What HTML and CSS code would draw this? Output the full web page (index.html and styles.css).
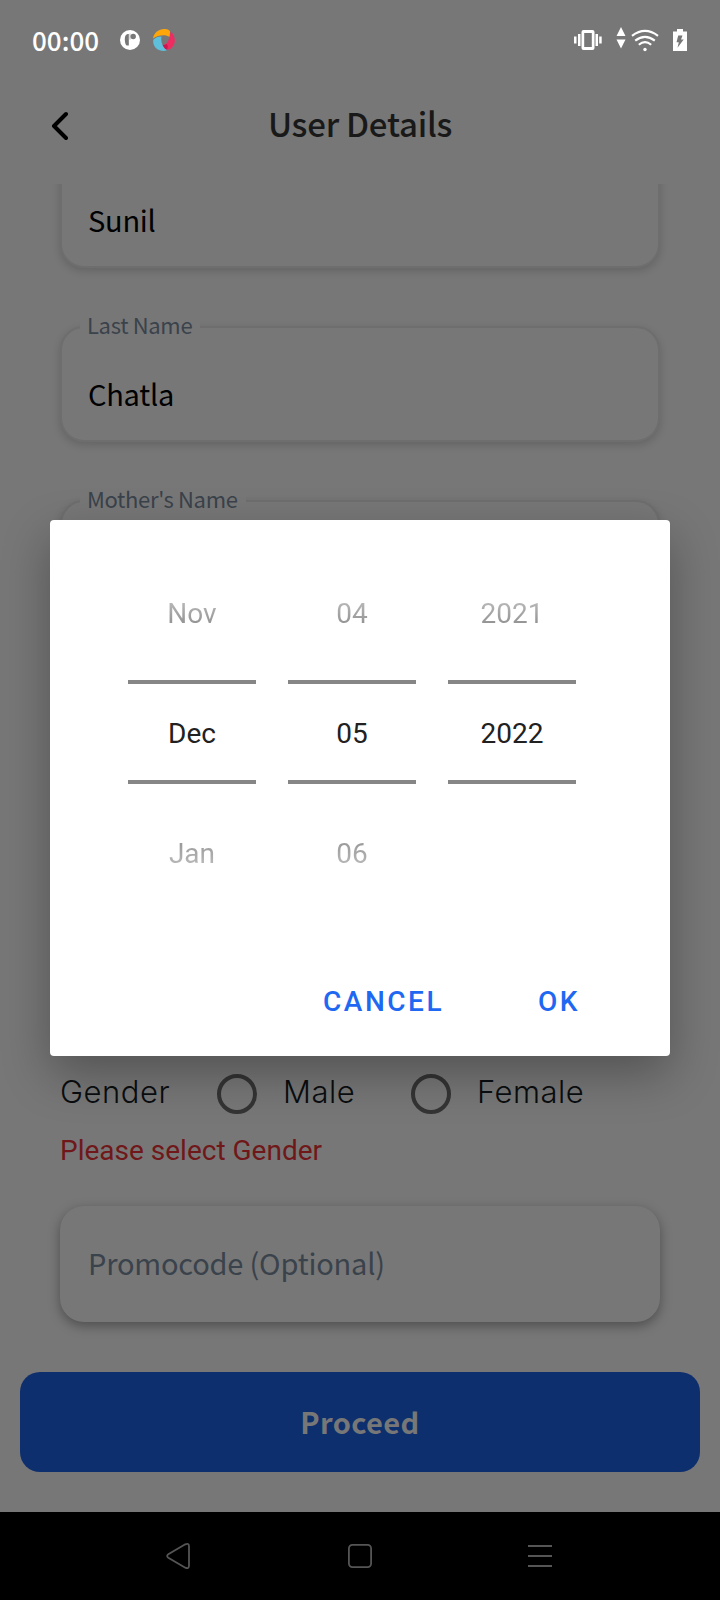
FILE: index.html
```html
<!DOCTYPE html>
<html lang="en">
<head>
<meta charset="utf-8">
<title>User Details</title>
<link rel="stylesheet" href="styles.css">
</head>
<body>
<div class="screen">
  <div class="status">
    <span class="clock">00:00</span>
    <svg class="app-p" width="20" height="20" viewBox="0 0 20 20"><circle cx="10" cy="10" r="10" fill="#fff"/><path d="M8.800 4C6 4 4.800 5.600 4.800 9.500S6 15.600 7 15.600H8.800Z" fill="#777"/><circle cx="13.200" cy="6.500" r="2.700" fill="#777"/><path d="M10 3.600v6" stroke="#777" stroke-width=".5"/></svg>
    <svg class="app-swirl" width="22" height="22" viewBox="0 0 22 22">
      <path d="M0 9.500C1 3.500 6 0 11 0c4 0 6.500 1.500 6 3.500L16.500 8C13 5.500 6 5.500 0 9.500Z" fill="#fda60a"/>
      <path d="M17.500 2.500C21 5 22.500 10 21.500 14c-1.500 5-5 7-7.500 6.500-3 0-5-2.500-5.500-4.500C13 16.500 17 12 17.500 2.500Z" fill="#ee2c62"/>
      <path d="M8.800 15.800c1.500.4 3.500.2 5-.8 1.500 2 1 4 .2 5.500-2.500 0-4.500-2-5.200-4.700Z" fill="#c9184e"/>
      <path d="M.2 11C2.500 8.500 4.500 7.600 8.500 7.500 7.500 12 9.500 18.500 14 21.200 9 23 4 21 2 18 .5 16 0 13.500.2 11Z" fill="#5fc0dc"/>
    </svg>
    <span class="spacer"></span>
    <svg class="vibrate" width="28" height="20" viewBox="0 0 28 20" fill="#fff"><path fill-rule="evenodd" d="M9.500 0h9Q20.500 0 20.500 2v16q0 2-2 2h-9q-2 0-2-2V2q0-2 2-2Zm.7 3v14h7.600V3Z"/><path d="M4 4h2.500v12H4zM21.500 4H24v12h-2.500zM0 6.500h2.500v7H0zM25.200 6.500h2.500v7h-2.500z"/></svg>
    <svg class="updown" width="10" height="22" viewBox="0 0 10 22" fill="#fff"><path d="M5 0l4.500 9h-9zM5 21.500L9.500 12.500h-9z"/></svg>
    <svg class="wifi" width="28" height="23" viewBox="0 0 28 23" fill="none" stroke="#fff" stroke-width="2.100"><path d="M1 6.800Q14-3 27 6.800M4.200 11.700Q14 4 23.800 11.700M7.800 15.800Q14 10.400 20.200 15.800"/><circle cx="14" cy="20.500" r="1.700" fill="#fff" stroke="none"/></svg>
    <svg class="battery" width="14" height="22" viewBox="0 0 14 22"><path d="M4 0h6v2.500h4V22H0V2.500h4Z" fill="#fff"/><path d="M5.200 6.500h4.300L8 10.500h2.700L4.500 18.800l1.300-5.600H3.500Z" fill="#777"/></svg>
  </div>
  <div class="header">
    <svg class="back" width="18" height="30" viewBox="0 0 18 30"><path d="M16 3L4 15 16 27" fill="none" stroke="#000" stroke-width="4" stroke-linecap="round" stroke-linejoin="round"/></svg>
    <h1 class="title">User Details</h1>
  </div>
  <div class="form">
    <div class="field"><span class="value">Sunil</span></div>
    <div class="field"><span class="label">Last Name</span><span class="value">Chatla</span></div>
    <div class="field"><span class="label">Mother's Name</span></div>
    <div class="gender">
      <span class="gender-title">Gender</span>
      <span class="radio"></span><span class="option male">Male</span>
      <span class="radio"></span><span class="option">Female</span>
    </div>
    <div class="error">Please select Gender</div>
    <div class="promo">Promocode (Optional)</div>
  </div>
  <div class="proceed">Proceed</div>
  <div class="nav">
    <svg width="26" height="28" viewBox="0 0 26 28" fill="none" stroke="#555" stroke-width="1.800"><path d="M20.300 2.300 3.300 12.300Q1 14 3.300 15.700L20.300 25.700Q23.900 27.200 24 23.800V4.200Q23.900.8 20.300 2.300Z"/></svg>
    <svg width="24" height="24" viewBox="0 0 24 24" fill="none" stroke="#555" stroke-width="1.800"><rect x=".9" y=".9" width="22.200" height="22.200" rx="3.500"/></svg>
    <svg width="24" height="22" viewBox="0 0 24 22" stroke="#555" stroke-width="2"><path d="M0 1h24M0 11h24M0 21h24"/></svg>
  </div>
  <div class="dialog">
    <div class="pickers">
      <div class="picker"><span class="dim">Nov</span><span class="current">Dec</span><span class="dim below">Jan</span></div>
      <div class="picker"><span class="dim">04</span><span class="current">05</span><span class="dim below">06</span></div>
      <div class="picker"><span class="dim">2021</span><span class="current">2022</span></div>
    </div>
    <div class="actions"><span class="cancel">CANCEL</span><span>OK</span></div>
  </div>
</div>
</body>
</html>
```
FILE: styles.css
```css
* { box-sizing: border-box; }
body { margin: 0; background: #777; }
svg { display: block; flex: none; }
.screen {
  position: relative;
  display: flex;
  flex-direction: column;
  width: 720px;
  height: 1600px;
  overflow: hidden;
  background: #777;
  font-family: "Noto Sans CJK SC", "Noto Sans", sans-serif;
  white-space: nowrap;
}
.status { display: flex; align-items: center; height: 80px; padding: 0 33px 0 32px; }
.clock { width: 88px; padding-bottom: 1px; font-size: 26px; line-height: 40px; font-weight: 500; color: #fff; }
.app-swirl { margin-left: 13px; }
.spacer { flex: 1; }
.updown { margin: -4px 0 0 14px; }
.wifi { margin: 0 0 0 5px; }
.battery { margin-left: 14px; }
.header { display: flex; align-items: center; height: 92px; margin-bottom: 12px; padding-left: 50px; }
.title { flex: 1; margin: 0 68px 0 0; padding-bottom: 6px; text-align: center; font-size: 33px; line-height: 44px; font-weight: 500; letter-spacing: -.25px; color: #191919; }
.form { display: flex; flex-direction: column; height: 1188px; padding: 0 60px; overflow: hidden; }
.field {
  position: relative;
  flex: none;
  height: 116px;
  margin-bottom: 58px;
  padding: 45px 0 0 26px;
  border: 2px solid #6e6e6e;
  border-radius: 24px;
  background: #777;
  box-shadow: 0 3px 8px rgba(0, 0, 0, .16);
}
.field:first-child { margin-top: -32px; }
.label {
  position: absolute;
  left: 18px;
  top: -20px;
  padding: 0 8px 0 7px;
  background: #777;
  font-size: 22px;
  line-height: 32px;
  letter-spacing: -.33px;
  color: #3a424b;
}
.value { display: block; font-size: 29px; line-height: 40px; letter-spacing: -.25px; color: #000; }
.gender { display: flex; align-items: center; flex: none; height: 40px; margin-top: 400px; font: 350 31px/40px Inter, sans-serif; letter-spacing: .5px; color: #0a0d0f; }
.gender-title { width: 157px; padding-bottom: 4px; }
.radio { width: 40px; height: 40px; border: 4px solid #343434; border-radius: 50%; }
.option { padding: 0 0 4px 26px; }
.male { width: 154px; }
.error { flex: none; height: 40px; margin-top: 17px; font: 400 28px/40px Roboto, sans-serif; color: #701719; }
.promo {
  flex: none;
  height: 116px;
  margin-top: 35px;
  padding-left: 28px;
  border-radius: 24px;
  background: #777;
  box-shadow: 0 4px 12px rgba(0, 0, 0, .34);
  font-size: 29px;
  line-height: 112px;
  letter-spacing: -.2px;
  color: #3a424b;
}
.proceed { flex: none; height: 100px; margin: 0 20px 40px; border-radius: 20px; background: #0e2f6e; text-align: center; font-size: 29px; line-height: 98px; font-weight: 700; letter-spacing: .4px; color: #777; }
.nav { display: flex; align-items: center; justify-content: space-between; height: 88px; padding: 0 168px 0 165px; background: #000; }
.dialog {
  position: absolute;
  left: 50px;
  top: 520px;
  width: 620px;
  height: 536px;
  padding-top: 32px;
  border-radius: 4px;
  background: #fff;
  box-shadow: 0 18px 48px rgba(0, 0, 0, .3);
  font-family: Roboto, sans-serif;
}
.pickers { display: flex; gap: 32px; height: 360px; padding-left: 78px; }
.picker { width: 128px; text-align: center; font-size: 28px; }
.picker span { display: block; }
.dim {
  height: 120px;
  line-height: 124px;
  background: linear-gradient(#cfcfcf 30%, #7f7f7f 70%);
  background-clip: text;
  color: transparent;
}
.below { background-image: linear-gradient(#858585 30%, #c8c8c8 70%); }
.current { height: 104px; margin: 8px 0; border: solid #868686; border-width: 4px 0; line-height: 100px; color: #212121; }
.actions { display: flex; justify-content: flex-end; margin-top: 70px; padding-right: 90px; font-size: 28px; line-height: 40px; font-weight: 500; letter-spacing: 2.500px; color: #1f68f2; }
.cancel { margin-right: 94px; }
```
